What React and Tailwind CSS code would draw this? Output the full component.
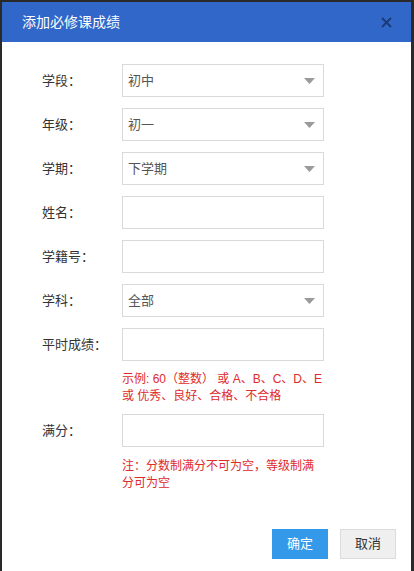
export default function App() {
  const font = { fontFamily: '"Liberation Sans", "Noto Sans CJK SC", sans-serif' };
  const Label = ({ children }) => (
    <div className="w-[80px] text-[13px] text-[#333] leading-[20px]">{children}</div>
  );
  const Arrow = () => (
    <svg width="11" height="6" viewBox="0 0 11 6" className="shrink-0">
      <path d="M0 0 L11 0 L5.5 6 Z" fill="#9a9a9a" />
    </svg>
  );
  const SelectRow = ({ label, value }) => (
    <div className="flex items-center mb-[11px]">
      <Label>{label}</Label>
      <div className="w-[202px] h-[33px] border border-[#d9d9d9] flex items-center justify-between pl-[5px] pr-[8px] text-[13px] text-[#555]">
        <span>{value}</span>
        <Arrow />
      </div>
    </div>
  );
  const InputRow = ({ label, mb = true }) => (
    <div className={mb ? "flex items-center mb-[11px]" : "flex items-center"}>
      <Label>{label}</Label>
      <div className="w-[202px] h-[33px] border border-[#d9d9d9] bg-white" />
    </div>
  );
  return (
    <div className="w-[414px] h-[571px] bg-[#2a2a2a] pl-[2px] pr-[3px] pt-[2px] overflow-hidden" style={font}>
      <div className="bg-white h-full flex flex-col">
        <div className="h-[40px] bg-[#3167c9] flex items-center justify-between pl-[20px] pr-[19px] shrink-0">
          <span className="text-white text-[14px]">添加必修课成绩</span>
          <svg width="11" height="11" viewBox="0 0 11 11">
            <path d="M1 1 L10 10 M10 1 L1 10" stroke="#1b3a72" strokeWidth="1.8" />
          </svg>
        </div>
        <div className="pl-[40px] pt-[22px] flex flex-col">
          <SelectRow label="学段：" value="初中" />
          <SelectRow label="年级：" value="初一" />
          <SelectRow label="学期：" value="下学期" />
          <InputRow label="姓名：" />
          <InputRow label="学籍号：" />
          <SelectRow label="学科：" value="全部" />
          <InputRow label="平时成绩：" mb={false} />
          <div className="ml-[80px] mt-[10px] w-[210px] text-[12px] leading-[17px] text-[#de2b2b]">
            <div>示例: 60（整数） 或 A、B、C、D、E</div>
            <div>或 优秀、良好、合格、不合格</div>
          </div>
          <div className="mt-[9px]">
            <InputRow label="满分：" mb={false} />
          </div>
          <div className="ml-[80px] mt-[11px] w-[210px] text-[12px] leading-[17px] text-[#de2b2b]">
            <div>注：分数制满分不可为空，等级制满</div>
            <div>分可为空</div>
          </div>
        </div>
        <div className="mt-auto flex justify-end gap-[12px] pr-[15px] pb-[12px]">
          <button className="w-[56px] h-[30px] bg-[#3399e8] text-white text-[13px]">确定</button>
          <button className="w-[56px] h-[30px] bg-[#efefef] border border-[#dcdcdc] text-[#333] text-[13px]">取消</button>
        </div>
      </div>
    </div>
  );
}
